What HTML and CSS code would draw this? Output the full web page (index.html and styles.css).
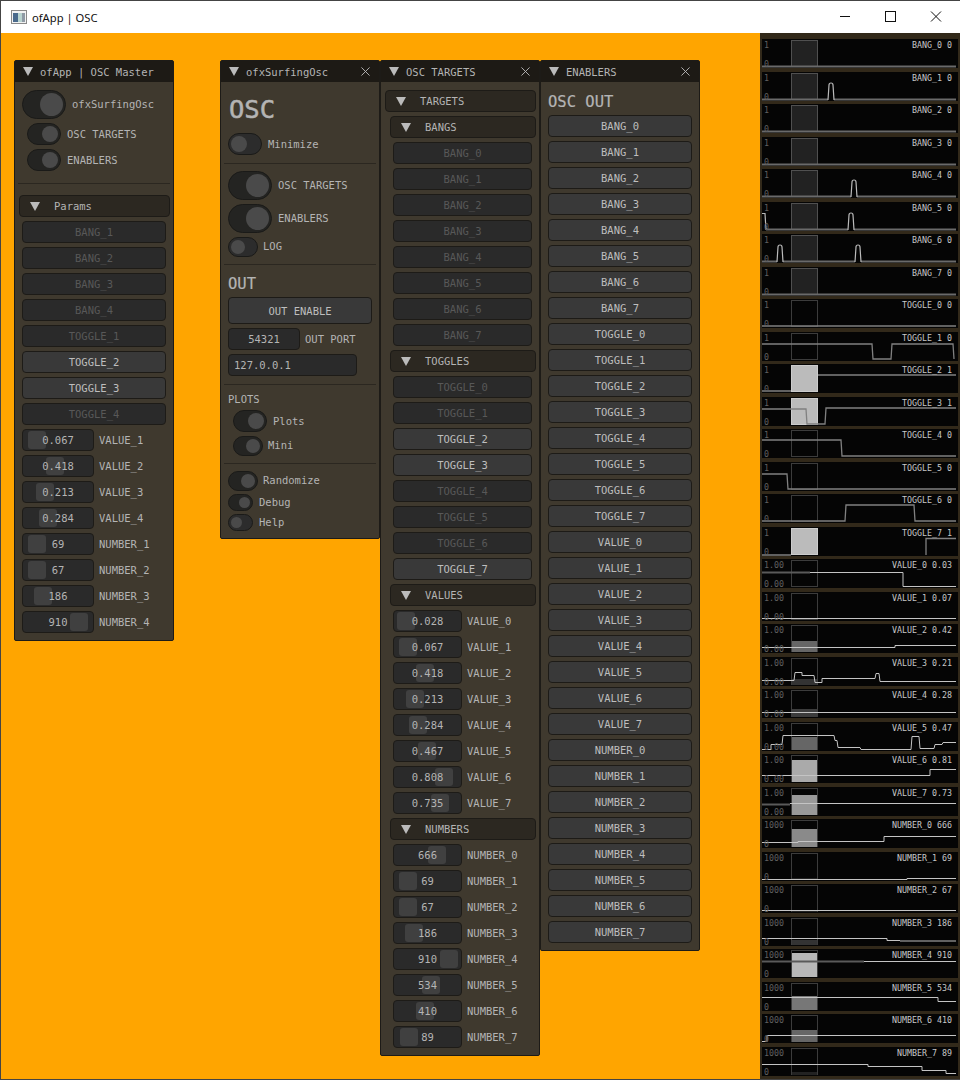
FILE: index.html
```html
<!DOCTYPE html>
<html lang="en">
<head>
    <meta charset="UTF-8">
    <title>ofApp | OSC</title>
    <link rel="stylesheet" href="styles.css">
</head>
<body>
<div class="app">
    <header class="titlebar">
        <svg class="app-icon" viewBox="0 0 16 14">
            <rect x="0.5" y="0.5" width="15" height="13" fill="#f2f2f2" stroke="#8a8a8a"/>
            <rect x="2" y="3" width="5" height="9" fill="#4a6a8c"/>
            <rect x="7" y="3" width="4" height="9" fill="#b9d4d0"/>
            <rect x="11" y="3" width="3" height="9" fill="#8f9aa5"/>
        </svg>
        <span class="app-title">ofApp | OSC</span>
        <div class="win-controls">
            <svg viewBox="0 0 46 32"><path d="M18 15.5H28" stroke="#111" fill="none"/></svg>
            <svg viewBox="0 0 46 32"><rect x="17.5" y="10.5" width="10" height="10" stroke="#111" fill="none"/></svg>
            <svg viewBox="0 0 46 32"><path d="M17 10.5L27 20.5M27 10.5L17 20.5" stroke="#111" fill="none"/></svg>
        </div>
    </header>

    <main class="desktop">
        <!-- master window -->
        <section class="window win-master">
            <div class="win-head"><i class="tri"></i><span>ofApp | OSC Master</span></div>
            <div class="win-body">
                <div class="row"><i class="tog tog-xl on"></i><span class="lbl">ofxSurfingOsc</span></div>
                <div class="row ind-5"><i class="tog on"></i><span class="lbl">OSC TARGETS</span></div>
                <div class="row ind-5"><i class="tog on"></i><span class="lbl">ENABLERS</span></div>
                <hr class="sep sep-wide">
                <div class="tree tree-top"><i class="tri"></i><span>Params</span></div>
                <button class="btn">BANG_1</button>
                <button class="btn">BANG_2</button>
                <button class="btn">BANG_3</button>
                <button class="btn">BANG_4</button>
                <button class="btn">TOGGLE_1</button>
                <button class="btn on">TOGGLE_2</button>
                <button class="btn on">TOGGLE_3</button>
                <button class="btn">TOGGLE_4</button>
                <div class="row"><div class="slider"><i class="knob" style="left:5px"></i><span>0.067</span></div><span class="lbl">VALUE_1</span></div>
                <div class="row"><div class="slider"><i class="knob" style="left:23px"></i><span>0.418</span></div><span class="lbl">VALUE_2</span></div>
                <div class="row"><div class="slider"><i class="knob" style="left:13px"></i><span>0.213</span></div><span class="lbl">VALUE_3</span></div>
                <div class="row"><div class="slider"><i class="knob" style="left:16px"></i><span>0.284</span></div><span class="lbl">VALUE_4</span></div>
                <div class="row"><div class="slider"><i class="knob" style="left:5px"></i><span>69</span></div><span class="lbl">NUMBER_1</span></div>
                <div class="row"><div class="slider"><i class="knob" style="left:5px"></i><span>67</span></div><span class="lbl">NUMBER_2</span></div>
                <div class="row"><div class="slider"><i class="knob" style="left:11px"></i><span>186</span></div><span class="lbl">NUMBER_3</span></div>
                <div class="row"><div class="slider"><i class="knob" style="left:47px"></i><span>910</span></div><span class="lbl">NUMBER_4</span></div>
            </div>
        </section>

        <!-- main osc window -->
        <section class="window win-osc">
            <div class="win-head"><i class="tri"></i><span>ofxSurfingOsc</span><svg class="close" viewBox="0 0 10 10"><path d="M0.5 0.5L9.5 9.5M9.5 0.5L0.5 9.5"/></svg></div>
            <div class="win-body">
                <div class="big-title">OSC</div>
                <div class="row"><i class="tog"></i><span class="lbl">Minimize</span></div>
                <hr class="sep sep-low">
                <div class="row"><i class="tog tog-xl on"></i><span class="lbl">OSC TARGETS</span></div>
                <div class="row"><i class="tog tog-xl on"></i><span class="lbl">ENABLERS</span></div>
                <div class="row"><i class="tog tog-sm"></i><span class="lbl">LOG</span></div>
                <hr class="sep">
                <div class="mid-title">OUT</div>
                <button class="btn on btn-tall">OUT ENABLE</button>
                <div class="row"><div class="slider"><span>54321</span></div><span class="lbl">OUT PORT</span></div>
                <div class="input">127.0.0.1</div>
                <hr class="sep sep-low">
                <div class="small-title">PLOTS</div>
                <div class="row ind-5"><i class="tog on"></i><span class="lbl">Plots</span></div>
                <div class="row ind-5"><i class="tog tog-sm on"></i><span class="lbl">Mini</span></div>
                <hr class="sep">
                <div class="row"><i class="tog tog-sm on"></i><span class="lbl">Randomize</span></div>
                <div class="row tight"><i class="tog tog-xs on"></i><span class="lbl">Debug</span></div>
                <div class="row tight"><i class="tog tog-xs"></i><span class="lbl">Help</span></div>
            </div>
        </section>

        <!-- targets -->
        <section class="window win-targets">
            <div class="win-head"><i class="tri"></i><span>OSC TARGETS</span><svg class="close" viewBox="0 0 10 10"><path d="M0.5 0.5L9.5 9.5M9.5 0.5L0.5 9.5"/></svg></div>
            <div class="win-body">
                <div class="tree tree-top"><i class="tri"></i><span>TARGETS</span></div>
                <div class="tree tree-sub"><i class="tri"></i><span>BANGS</span></div>
                <button class="btn ind-5">BANG_0</button>
                <button class="btn ind-5">BANG_1</button>
                <button class="btn ind-5">BANG_2</button>
                <button class="btn ind-5">BANG_3</button>
                <button class="btn ind-5">BANG_4</button>
                <button class="btn ind-5">BANG_5</button>
                <button class="btn ind-5">BANG_6</button>
                <button class="btn ind-5">BANG_7</button>
                <div class="tree tree-sub"><i class="tri"></i><span>TOGGLES</span></div>
                <button class="btn ind-5">TOGGLE_0</button>
                <button class="btn ind-5">TOGGLE_1</button>
                <button class="btn on ind-5">TOGGLE_2</button>
                <button class="btn on ind-5">TOGGLE_3</button>
                <button class="btn ind-5">TOGGLE_4</button>
                <button class="btn ind-5">TOGGLE_5</button>
                <button class="btn ind-5">TOGGLE_6</button>
                <button class="btn on ind-5">TOGGLE_7</button>
                <div class="tree tree-sub"><i class="tri"></i><span>VALUES</span></div>
                <div class="row ind-5"><div class="slider slider-sm"><i class="knob" style="left:3px"></i><span>0.028</span></div><span class="lbl">VALUE_0</span></div>
                <div class="row ind-5"><div class="slider slider-sm"><i class="knob" style="left:5px"></i><span>0.067</span></div><span class="lbl">VALUE_1</span></div>
                <div class="row ind-5"><div class="slider slider-sm"><i class="knob" style="left:22px"></i><span>0.418</span></div><span class="lbl">VALUE_2</span></div>
                <div class="row ind-5"><div class="slider slider-sm"><i class="knob" style="left:12px"></i><span>0.213</span></div><span class="lbl">VALUE_3</span></div>
                <div class="row ind-5"><div class="slider slider-sm"><i class="knob" style="left:15px"></i><span>0.284</span></div><span class="lbl">VALUE_4</span></div>
                <div class="row ind-5"><div class="slider slider-sm"><i class="knob" style="left:24px"></i><span>0.467</span></div><span class="lbl">VALUE_5</span></div>
                <div class="row ind-5"><div class="slider slider-sm"><i class="knob" style="left:41px"></i><span>0.808</span></div><span class="lbl">VALUE_6</span></div>
                <div class="row ind-5"><div class="slider slider-sm"><i class="knob" style="left:37px"></i><span>0.735</span></div><span class="lbl">VALUE_7</span></div>
                <div class="tree tree-sub"><i class="tri"></i><span>NUMBERS</span></div>
                <div class="row ind-5"><div class="slider slider-sm"><i class="knob" style="left:34px"></i><span>666</span></div><span class="lbl">NUMBER_0</span></div>
                <div class="row ind-5"><div class="slider slider-sm"><i class="knob" style="left:5px"></i><span>69</span></div><span class="lbl">NUMBER_1</span></div>
                <div class="row ind-5"><div class="slider slider-sm"><i class="knob" style="left:5px"></i><span>67</span></div><span class="lbl">NUMBER_2</span></div>
                <div class="row ind-5"><div class="slider slider-sm"><i class="knob" style="left:11px"></i><span>186</span></div><span class="lbl">NUMBER_3</span></div>
                <div class="row ind-5"><div class="slider slider-sm"><i class="knob" style="left:46px"></i><span>910</span></div><span class="lbl">NUMBER_4</span></div>
                <div class="row ind-5"><div class="slider slider-sm"><i class="knob" style="left:28px"></i><span>534</span></div><span class="lbl">NUMBER_5</span></div>
                <div class="row ind-5"><div class="slider slider-sm"><i class="knob" style="left:22px"></i><span>410</span></div><span class="lbl">NUMBER_6</span></div>
                <div class="row ind-5"><div class="slider slider-sm"><i class="knob" style="left:6px"></i><span>89</span></div><span class="lbl">NUMBER_7</span></div>
            </div>
        </section>

        <!-- enablers -->
        <section class="window win-enablers">
            <div class="win-head"><i class="tri"></i><span>ENABLERS</span><svg class="close" viewBox="0 0 10 10"><path d="M0.5 0.5L9.5 9.5M9.5 0.5L0.5 9.5"/></svg></div>
            <div class="win-body">
                <div class="out-title">OSC OUT</div>
                <button class="btn on">BANG_0</button>
                <button class="btn on">BANG_1</button>
                <button class="btn on">BANG_2</button>
                <button class="btn on">BANG_3</button>
                <button class="btn on">BANG_4</button>
                <button class="btn on">BANG_5</button>
                <button class="btn on">BANG_6</button>
                <button class="btn on">BANG_7</button>
                <button class="btn on">TOGGLE_0</button>
                <button class="btn on">TOGGLE_1</button>
                <button class="btn on">TOGGLE_2</button>
                <button class="btn on">TOGGLE_3</button>
                <button class="btn on">TOGGLE_4</button>
                <button class="btn on">TOGGLE_5</button>
                <button class="btn on">TOGGLE_6</button>
                <button class="btn on">TOGGLE_7</button>
                <button class="btn on">VALUE_0</button>
                <button class="btn on">VALUE_1</button>
                <button class="btn on">VALUE_2</button>
                <button class="btn on">VALUE_3</button>
                <button class="btn on">VALUE_4</button>
                <button class="btn on">VALUE_5</button>
                <button class="btn on">VALUE_6</button>
                <button class="btn on">VALUE_7</button>
                <button class="btn on">NUMBER_0</button>
                <button class="btn on">NUMBER_1</button>
                <button class="btn on">NUMBER_2</button>
                <button class="btn on">NUMBER_3</button>
                <button class="btn on">NUMBER_4</button>
                <button class="btn on">NUMBER_5</button>
                <button class="btn on">NUMBER_6</button>
                <button class="btn on">NUMBER_7</button>
            </div>
        </section>

        <!-- plots -->
        <aside class="plots">
            <div class="plot"><span class="p-max">1</span><span class="p-min">0</span><span class="p-name">BANG_0 0</span><svg viewBox="0 0 194 29"><rect class="box box-bang" x="29.5" y="1.5" width="26" height="26"/><path class="base" d="M0 27.5H194"/></svg></div>
            <div class="plot"><span class="p-max">1</span><span class="p-min">0</span><span class="p-name">BANG_1 0</span><svg viewBox="0 0 194 29"><rect class="box box-bang" x="29.5" y="1.5" width="26" height="26"/><path class="base" d="M0 27.5H66M72 27.5H194"/><path class="peak" d="M66 28L67 13Q67 11 69 11Q71 11 71 13L72 28"/></svg></div>
            <div class="plot"><span class="p-max">1</span><span class="p-min">0</span><span class="p-name">BANG_2 0</span><svg viewBox="0 0 194 29"><rect class="box box-bang" x="29.5" y="1.5" width="26" height="26"/><path class="base" d="M0 27.5H194"/></svg></div>
            <div class="plot"><span class="p-max">1</span><span class="p-min">0</span><span class="p-name">BANG_3 0</span><svg viewBox="0 0 194 29"><rect class="box box-bang" x="29.5" y="1.5" width="26" height="26"/><path class="base" d="M0 27.5H194"/></svg></div>
            <div class="plot"><span class="p-max">1</span><span class="p-min">0</span><span class="p-name">BANG_4 0</span><svg viewBox="0 0 194 29"><rect class="box box-bang" x="29.5" y="1.5" width="26" height="26"/><path class="base" d="M0 27.5H89M95 27.5H194"/><path class="peak" d="M89 28L90 13Q90 11 92 11Q94 11 94 13L95 28"/></svg></div>
            <div class="plot"><span class="p-max">1</span><span class="p-min">0</span><span class="p-name">BANG_5 0</span><svg viewBox="0 0 194 29"><rect class="box box-bang" x="29.5" y="1.5" width="26" height="26"/><path class="base" d="M4 27.5H86M92 27.5H194"/><path class="peak" d="M86 28L87 13Q87 11 89 11Q91 11 91 13L92 28"/><path class="peak" d="M0 11.5H3L4 28"/></svg></div>
            <div class="plot"><span class="p-max">1</span><span class="p-min">0</span><span class="p-name">BANG_6 0</span><svg viewBox="0 0 194 29"><rect class="box box-bang" x="29.5" y="1.5" width="26" height="26"/><path class="base" d="M0 27.5H15M21 27.5H93M99 27.5H194"/><path class="peak" d="M15 28L16 13Q16 11 18 11Q20 11 20 13L21 28"/><path class="peak" d="M93 28L94 13Q94 11 96 11Q98 11 98 13L99 28"/></svg></div>
            <div class="plot"><span class="p-max">1</span><span class="p-min">0</span><span class="p-name">BANG_7 0</span><svg viewBox="0 0 194 29"><rect class="box box-bang" x="29.5" y="1.5" width="26" height="26"/><path class="base" d="M0 27.5H194"/></svg></div>

            <div class="plot"><span class="p-max">1</span><span class="p-min">0</span><span class="p-name">TOGGLE_0 0</span><svg viewBox="0 0 194 29"><rect class="box" x="29.5" y="1.5" width="26" height="26"/><path class="step" d="M0 27H194"/></svg></div>
            <div class="plot"><span class="p-max">1</span><span class="p-min">0</span><span class="p-name">TOGGLE_1 0</span><svg viewBox="0 0 194 29"><rect class="box" x="29.5" y="1.5" width="26" height="26"/><path class="step" d="M0 12H110L111 27H129L130 12H191L192 27"/></svg></div>
            <div class="plot"><span class="p-max">1</span><span class="p-min">0</span><span class="p-name">TOGGLE_2 1</span><svg viewBox="0 0 194 29"><rect class="box box-on" x="29.5" y="1.5" width="26" height="26"/><path class="step" d="M0 27H29M56 11H194"/></svg></div>
            <div class="plot"><span class="p-max">1</span><span class="p-min">0</span><span class="p-name">TOGGLE_3 1</span><svg viewBox="0 0 194 29"><rect class="box box-on" x="29.5" y="1.5" width="26" height="26"/><path class="step" d="M0 12H44L45 27H63L64 11H194"/></svg></div>
            <div class="plot"><span class="p-max">1</span><span class="p-min">0</span><span class="p-name">TOGGLE_4 0</span><svg viewBox="0 0 194 29"><rect class="box" x="29.5" y="1.5" width="26" height="26"/><path class="step" d="M0 11H79L80 27H194"/></svg></div>
            <div class="plot"><span class="p-max">1</span><span class="p-min">0</span><span class="p-name">TOGGLE_5 0</span><svg viewBox="0 0 194 29"><rect class="box" x="29.5" y="1.5" width="26" height="26"/><path class="step" d="M0 12H25L26 27H194"/></svg></div>
            <div class="plot"><span class="p-max">1</span><span class="p-min">0</span><span class="p-name">TOGGLE_6 0</span><svg viewBox="0 0 194 29"><rect class="box" x="29.5" y="1.5" width="26" height="26"/><path class="step" d="M0 27H83L84 11H152L153 27H194"/></svg></div>
            <div class="plot"><span class="p-max">1</span><span class="p-min">0</span><span class="p-name">TOGGLE_7 1</span><svg viewBox="0 0 194 29"><rect class="box box-on" x="29.5" y="1.5" width="26" height="26"/><path class="step" d="M0 28H29M164 28V11.5H194"/></svg></div>

            <div class="plot"><span class="p-max">1.00</span><span class="p-min">0.00</span><span class="p-name">VALUE_0 0.03</span><svg viewBox="0 0 194 29"><rect class="box" x="29.5" y="1.5" width="26" height="26"/><path class="dim" d="M0 13.5H48"/><path class="line" d="M48 13.5H141V27.5H194"/></svg></div>
            <div class="plot"><span class="p-max">1.00</span><span class="p-min">0.00</span><span class="p-name">VALUE_1 0.07</span><svg viewBox="0 0 194 29"><rect class="box" x="29.5" y="1.5" width="26" height="26"/><path class="line" d="M0 26.5H194"/></svg></div>
            <div class="plot"><span class="p-max">1.00</span><span class="p-min">0.00</span><span class="p-name">VALUE_2 0.42</span><svg viewBox="0 0 194 29"><rect class="box" x="29.5" y="1.5" width="26" height="26"/><rect x="30" y="17" width="25" height="11" fill="#666"/><path class="line" d="M0 23.5H133V21.5H194"/></svg></div>
            <div class="plot"><span class="p-max">1.00</span><span class="p-min">0.00</span><span class="p-name">VALUE_3 0.21</span><svg viewBox="0 0 194 29"><rect class="box" x="29.5" y="1.5" width="26" height="26"/><rect x="30" y="22" width="25" height="6" fill="#333"/><path class="line" d="M0 23.5H32L33 15.5H40V18.5H52L53 25.5H60V21.5H113L114 16.5H117L118 24.5H194"/></svg></div>
            <div class="plot"><span class="p-max">1.00</span><span class="p-min">0.00</span><span class="p-name">VALUE_4 0.28</span><svg viewBox="0 0 194 29"><rect class="box" x="29.5" y="1.5" width="26" height="26"/><rect x="30" y="20" width="25" height="8" fill="#3c3c3c"/><path class="line" d="M0 23.5H194"/></svg></div>
            <div class="plot"><span class="p-max">1.00</span><span class="p-min">0.00</span><span class="p-name">VALUE_5 0.47</span><svg viewBox="0 0 194 29"><rect class="box" x="29.5" y="1.5" width="26" height="26"/><rect x="30" y="15" width="25" height="13" fill="#666"/><path class="line" d="M0 27.5H9V22.5H20L21 13.5H72L73 18.5H75L76 25.5H98L99 27.5H149L150 14.5H157L158 26.5H172L173 22.5H180L181 20.5H194"/></svg></div>
            <div class="plot"><span class="p-max">1.00</span><span class="p-min">0.00</span><span class="p-name">VALUE_6 0.81</span><svg viewBox="0 0 194 29"><rect class="box" x="29.5" y="1.5" width="26" height="26"/><rect x="30" y="6" width="25" height="22" fill="#aaa"/><path class="line" d="M0 21.5H168V15.5H194"/></svg></div>
            <div class="plot"><span class="p-max">1.00</span><span class="p-min">0.00</span><span class="p-name">VALUE_7 0.73</span><svg viewBox="0 0 194 29"><rect class="box" x="29.5" y="1.5" width="26" height="26"/><rect x="30" y="8" width="25" height="20" fill="#999"/><path class="dim" d="M0 17.5H28"/><path class="line" d="M28 16.5H194"/></svg></div>

            <div class="plot"><span class="p-max">1000</span><span class="p-min">0</span><span class="p-name">NUMBER_0 666</span><svg viewBox="0 0 194 29"><rect class="box" x="29.5" y="1.5" width="26" height="26"/><rect x="30" y="10" width="25" height="18" fill="#8a8a8a"/><path class="line" d="M0 23.5H36V22.5H122V17.5H194"/></svg></div>
            <div class="plot"><span class="p-max">1000</span><span class="p-min">0</span><span class="p-name">NUMBER_1 69</span><svg viewBox="0 0 194 29"><rect class="box" x="29.5" y="1.5" width="26" height="26"/><rect x="30" y="26" width="25" height="2" fill="#222"/><path class="line" d="M0 27.5H145V26.5H194"/></svg></div>
            <div class="plot"><span class="p-max">1000</span><span class="p-min">0</span><span class="p-name">NUMBER_2 67</span><svg viewBox="0 0 194 29"><rect class="box" x="29.5" y="1.5" width="26" height="26"/><rect x="30" y="26" width="25" height="2" fill="#222"/><path class="line" d="M0 26.5H194"/></svg></div>
            <div class="plot"><span class="p-max">1000</span><span class="p-min">0</span><span class="p-name">NUMBER_3 186</span><svg viewBox="0 0 194 29"><rect class="box" x="29.5" y="1.5" width="26" height="26"/><rect x="30" y="23" width="25" height="5" fill="#333"/><path class="line" d="M0 21.5H125V23.5H138"/><path class="step" d="M138 24H194"/></svg></div>
            <div class="plot"><span class="p-max">1000</span><span class="p-min">0</span><span class="p-name">NUMBER_4 910</span><svg viewBox="0 0 194 29"><rect class="box" x="29.5" y="1.5" width="26" height="26"/><rect x="30" y="4" width="25" height="24" fill="#b8b8b8"/><path class="dim" d="M0 12.5H102"/><path class="line" d="M102 12.5H194"/></svg></div>
            <div class="plot"><span class="p-max">1000</span><span class="p-min">0</span><span class="p-name">NUMBER_5 534</span><svg viewBox="0 0 194 29"><rect class="box" x="29.5" y="1.5" width="26" height="26"/><rect x="30" y="14" width="25" height="14" fill="#777"/><path class="line" d="M0 15.5H176V19.5H194"/></svg></div>
            <div class="plot"><span class="p-max">1000</span><span class="p-min">0</span><span class="p-name">NUMBER_6 410</span><svg viewBox="0 0 194 29"><rect class="box" x="29.5" y="1.5" width="26" height="26"/><rect x="30" y="16" width="25" height="12" fill="#666"/><path class="line" d="M0 27.5H5V21.5H194"/></svg></div>
            <div class="plot"><span class="p-max">1000</span><span class="p-min">0</span><span class="p-name">NUMBER_7 89</span><svg viewBox="0 0 194 29"><rect class="box" x="29.5" y="1.5" width="26" height="26"/><rect x="30" y="25" width="25" height="3" fill="#222"/><path class="line" d="M0 17.5H106V19.5H160V23.5H184V26.5H194"/></svg></div>
        </aside>
    </main>
</div>
</body>
</html>
```
FILE: styles.css
```css
* {
    box-sizing: border-box;
}

body {
    margin: 0;
    font-family: "DejaVu Sans Mono", "Liberation Mono", monospace;
    font-size: 10.5px;
    color: #b4b4b4;
}

.app {
    width: 960px;
    height: 1080px;
    display: flex;
    flex-direction: column;
    border: 1px solid #444;
    border-right: 0;
    background: #ffa500;
}

.titlebar {
    height: 32px;
    background: #fff;
    display: flex;
    align-items: center;
    padding-left: 10px;
    flex: none;
}

.app-icon {
    width: 16px;
    height: 14px;
}

.app-title {
    font-family: "Noto Sans", sans-serif;
    font-size: 11.2px;
    color: #111;
    margin-left: 5px;
}

.win-controls {
    display: flex;
    margin-left: auto;
}

.win-controls svg {
    width: 46px;
    height: 32px;
}

.desktop {
    position: relative;
    flex: 1;
}

/* windows, desktop offset is y-33 and x-1 */
.window {
    position: absolute;
    width: 160px;
    top: 27px;
    background: #3f392e;
    border: 1px solid #1d1b17;
    border-radius: 2px;
}

.win-master { left: 13px; }
.win-osc { left: 219px; }
.win-targets { left: 379px; }
.win-enablers { left: 539px; }

.win-head {
    height: 21px;
    background: #1d1a15;
    display: flex;
    align-items: center;
    padding-left: 8px;
    gap: 7px;
    position: relative;
}

.close {
    position: absolute;
    left: 140px;
    top: 6px;
    width: 9px;
    height: 9px;
    fill: none;
    stroke: #bbb;
}

.win-body {
    display: flex;
    flex-direction: column;
    gap: 4px;
    padding: 8px 7px 7px;
}

.tri {
    width: 0;
    height: 0;
    border-left: 5px solid transparent;
    border-right: 5px solid transparent;
    border-top: 9px solid #bbb;
    flex: none;
}

.row {
    display: flex;
    align-items: center;
    gap: 5px;
}

.tight {
    margin-top: -1px;
}

.ind-5 {
    margin-left: 5px;
}

.lbl {
    white-space: nowrap;
}

.sep {
    border: 0;
    height: 1px;
    margin: 3px -4px;
    background: #2b2720;
}

.sep-low {
    margin-top: 4px;
}

.sep-wide {
    margin: 8px -4px 7px;
}

.tree {
    height: 22px;
    display: flex;
    align-items: center;
    background: #2c2821;
    border: 1px solid #1d1b17;
    border-radius: 4px;
    gap: 14px;
}

.tree-top {
    margin: 0 -4px 0 -3px;
    padding-left: 10px;
}

.tree-sub {
    margin: 0 -4px 0 2px;
    padding-left: 10px;
}

.btn {
    height: 22px;
    padding: 0;
    border: 1px solid #1d1b17;
    border-radius: 4px;
    background: #2a2a2a;
    color: #585858;
    font: inherit;
    text-align: center;
}

.btn.on {
    background: #393939;
    color: #bebebe;
}

.btn-tall {
    height: 27px;
}

.slider {
    position: relative;
    width: 72px;
    height: 22px;
    background: #2a2a2a;
    border: 1px solid #1d1b17;
    border-radius: 4px;
    text-align: center;
    line-height: 20px;
    flex: none;
}

.slider-sm {
    width: 69px;
}

.slider span {
    position: relative;
}

.knob {
    position: absolute;
    top: 1px;
    width: 18px;
    height: 18px;
    background: #404040;
    border-radius: 3px;
}

.input {
    width: 129px;
    height: 22px;
    background: #2a2a2a;
    border: 1px solid #1d1b17;
    border-radius: 4px;
    line-height: 20px;
    padding-left: 5px;
}

/* toggles */
.tog {
    position: relative;
    width: 34px;
    height: 22px;
    margin-right: 1px;
    border-radius: 11px;
    background: #2c2c2c;
    border: 1px solid #1a1a18;
    flex: none;
}

.tog::after {
    content: "";
    position: absolute;
    top: 2px;
    left: 2px;
    width: 16px;
    height: 16px;
    border-radius: 50%;
    background: #4a4a4a;
}

.tog.on {
    background: #242422;
}

.tog.on::after {
    left: auto;
    right: 2px;
}

.tog-xl {
    width: 44px;
    height: 29px;
    border-radius: 15px;
}

.tog-xl::after {
    top: 2px;
    width: 23px;
    height: 23px;
}

.tog-sm {
    width: 30px;
    height: 20px;
    margin-right: 0;
    border-radius: 10px;
}

.tog-sm::after {
    width: 14px;
    height: 14px;
}

.tog-xs {
    width: 25px;
    height: 17px;
}

.tog-xs::after {
    width: 11px;
    height: 11px;
}

/* labels beside the odd sized toggles sit a pixel high */
.tog-xl + .lbl,
.tog-sm + .lbl,
.tog-xs + .lbl {
    margin-bottom: 2px;
}

.big-title {
    height: 39px;
    line-height: 39px;
    padding-left: 1px;
    font-size: 25.5px;
    -webkit-text-stroke: 0.5px #b4b4b4;
}

.mid-title {
    height: 21px;
    line-height: 25px;
    font-size: 15.5px;
    -webkit-text-stroke: 0.2px #b4b4b4;
}

.small-title {
    height: 14px;
    line-height: 14px;
}

.out-title {
    height: 21px;
    line-height: 25px;
    font-size: 15.5px;
    -webkit-text-stroke: 0.2px #b4b4b4;
}

/* plot strip */
.plots {
    position: absolute;
    left: 759px;
    right: 0;
    top: 0;
    bottom: 0;
    background: #32291a;
    padding: 6px 2px 0;
    display: grid;
    grid-auto-rows: 29px;
    row-gap: 3.5px;
}

.plot {
    position: relative;
    background: #050505;
    font-size: 8.3px;
    line-height: 10px;
}

.plot svg {
    display: block;
    width: 194px;
    height: 29px;
}

.p-max,
.p-min,
.p-name {
    position: absolute;
    white-space: nowrap;
}

.p-max {
    left: 2px;
    top: 1px;
    color: #606060;
}

.p-min {
    left: 2px;
    bottom: -1px;
    color: #606060;
}

.p-name {
    right: 6px;
    top: 1px;
    color: #c8c8c8;
}

.box {
    fill: none;
    stroke: #3c3c3c;
}

.box-bang {
    fill: #222;
    stroke: #505050;
}

.box-on {
    fill: #bbb;
    stroke: #ccc;
}

.base {
    fill: none;
    stroke: #6a6a6a;
    stroke-width: 2;
}

.peak {
    fill: none;
    stroke: #bbb;
    stroke-width: 1.2;
}

.step {
    fill: none;
    stroke: #808080;
    stroke-width: 1.3;
}

.line {
    fill: none;
    stroke: #c4c4c4;
}

.dim {
    fill: none;
    stroke: #5a5a5a;
    stroke-width: 2;
}
```
